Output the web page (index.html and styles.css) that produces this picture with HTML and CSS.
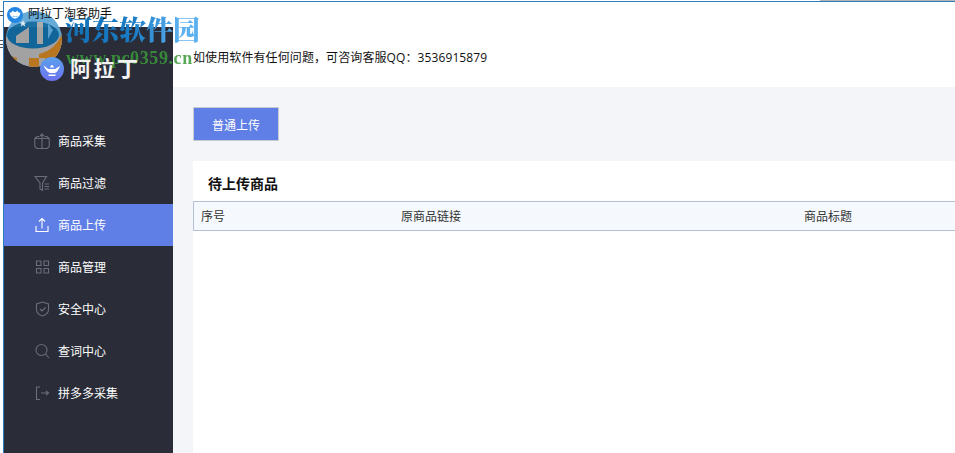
FILE: index.html
```html
<!DOCTYPE html>
<html lang="zh">
<head>
<meta charset="utf-8">
<title>阿拉丁淘客助手</title>
<link rel="stylesheet" href="styles.css">
</head>
<body>
<div class="desktop">
  <div class="topstrip"><span class="topstrip-gray"></span></div>
  <div class="window">
    <div class="titlebar">
      <svg class="appicon" viewBox="0 0 16 16"><circle cx="8" cy="8" r="8" fill="#2487e4"/><path d="M2.500 5.500C4 6 5 5 6 3.500c.6 1 1.300 1.600 2 1.600s1.500-.6 2-1.600c1 1.500 2 2.500 3.500 2-.5 3.500-3 6-5.500 6s-5-2.500-5.500-6z" fill="#fff"/><path d="M5 8.500c1 1.500 5 1.500 6 0-.5 2-5.500 2-6 0z" fill="#2487e4"/></svg>
      <span class="app-title">阿拉丁淘客助手</span>
    </div>
    <div class="app">
      <aside class="sidebar">
        <div class="brand">
          <svg class="brand-icon" viewBox="0 0 24 24"><defs><linearGradient id="bg" x1="0" y1="0" x2="0" y2="1"><stop offset="0" stop-color="#5aa0ee"/><stop offset="1" stop-color="#6d72ee"/></linearGradient></defs><circle cx="12" cy="12" r="12" fill="url(#bg)"/><path d="M3.500 8.500c2 .5 3 3 5 3.500h6c1.500 0 2.500-2 6-3-1.500 1.500-2 4-3.500 5.500-1 1-2 1.500-3.500 1.500h-3c-3 0-5-4-7-7.500z" fill="#fff"/><path d="M10 10.500c.5-1.500 1.300-2.300 2-2.500.7.2 1.500 1 2 2.500zM8.500 17.500h7v1.500h-7z" fill="#fff"/></svg>
          <span class="brand-name">阿拉丁</span>
        </div>
        <nav class="menu">
          <a class="item"><svg class="ico" viewBox="0 0 16 16"><path d="M5.500 3.500H3L.8 5.500v8l2.200 2h10l2.200-2v-8L13 3.500h-2.500M.8 5.500h14.400M8 5.500v10M8 7V1M6 3l2-2 2 2"/></svg><span class="label">商品采集</span></a>
          <a class="item"><svg class="ico" viewBox="0 0 16 16"><path d="M1 1.500h11.500L8.500 8v7.500L6 14V8zM10.500 9H15M10.500 11.500H15M10.500 14H15"/></svg><span class="label">商品过滤</span></a>
          <a class="item active"><svg class="ico" viewBox="0 0 16 16"><path d="M2 9v5.500h12V9M8 11.500V1.500M5 4.500l3-3 3 3"/></svg><span class="label">商品上传</span></a>
          <a class="item"><svg class="ico" viewBox="0 0 16 16"><path d="M2.500 2h4.500v4.500H2.500zM10 2h4.500v4.500H10zM2.500 9.500h4.500V14H2.500zM10 9.500h4.500V14H10z"/></svg><span class="label">商品管理</span></a>
          <a class="item"><svg class="ico" viewBox="0 0 16 16"><path d="M8.500 1l6 2v5.500c0 3-3 5.500-6 6.500-3-1-6-3.500-6-6.500V3zM6 8l2 2 3.500-3.500"/></svg><span class="label">安全中心</span></a>
          <a class="item"><svg class="ico" viewBox="0 0 16 16"><circle cx="7.500" cy="7" r="5.500"/><path d="M11.500 11l3.500 4"/></svg><span class="label">查词中心</span></a>
          <a class="item"><svg class="ico" viewBox="0 0 16 16"><path d="M6 2H2.500v12.500H6M7 8h7.500M12 6l2.500 2-2.500 2"/></svg><span class="label">拼多多采集</span></a>
        </nav>
      </aside>
      <main class="main">
        <header class="notice">如使用软件有任何问题，可咨询客服QQ：3536915879</header>
        <section class="content">
          <button class="upload-btn">普通上传</button>
          <div class="card">
            <h2 class="card-title">待上传商品</h2>
            <div class="thead">
              <span class="col col-id">序号</span>
              <span class="col col-url">原商品链接</span>
              <span class="col col-title">商品标题</span>
            </div>
          </div>
        </section>
      </main>
    </div>
  </div>
  <div class="watermark">
    <svg class="wm-logo" viewBox="0 0 58 56">
      <defs><clipPath id="disc"><circle cx="29" cy="28" r="28"/></clipPath></defs>
      <g clip-path="url(#disc)">
        <rect width="58" height="56" fill="#5ea6d6"/>
        <path d="M0 26h58v30H0z" fill="#a9a9a9"/>
        <path d="M58 20C54 32 46 40 34 43v4h6v9h18z" fill="#c07a20"/>
        <path d="M0 43l12 4v9H0zM24 47h10v9H24z" fill="#c07a20"/>
        <ellipse cx="28" cy="24" rx="26" ry="13.500" fill="#11699e"/>
        <path d="M11 25l13-9v16H11z" fill="#a9a9a9"/>
        <path d="M32 11h6v22h-6z" fill="#a9a9a9"/>
        <path d="M43 13l5 6-5 9z" fill="#5ea6d6"/>
        <path d="M18 9l1 2.500h2.500l-2 1.500.8 2.500-2.300-1.500-2.300 1.500.8-2.500-2-1.500H17z" fill="#fff" opacity=".85"/>
      </g>
    </svg>
    <div class="wm-title">河东软件园</div>
    <div class="wm-url">www.pc0359.cn</div>
    <span class="edge edge-top"></span>
    <span class="edge edge-mid"></span>
  </div>
</div>
</body>
</html>
```
FILE: styles.css
```css
* { box-sizing: border-box; }
html, body { margin: 0; padding: 0; }
body { font-family: "Open Sans", "Noto Sans CJK SC", sans-serif; overflow: hidden; background: #fff; }
.desktop { position: relative; width: 955px; height: 453px; overflow: hidden; padding-left: 3px; }
.topstrip { height: 1px; display: flex; justify-content: flex-end; }
.topstrip-gray { width: 135px; background: #b5b5b5; }
.window { height: 452px; border-top: 1px solid #2b7bbd; border-left: 1px solid #2b7bbd; display: flex; flex-direction: column; }
.titlebar { height: 25px; flex: none; display: flex; align-items: center; gap: 5px; padding-left: 3px; font-size: 12px; color: #111; }
.appicon { width: 16px; height: 16px; position: relative; z-index: 2; }
.app-title { margin-bottom: 3px; position: relative; z-index: 2; }
.app { flex: 1; display: flex; min-height: 0; }
.sidebar { width: 169px; flex: none; background: #2a2d38; }
.brand { height: 84px; display: flex; align-items: center; gap: 6px; padding: 0 0 0 36px; }
.brand-icon { width: 24px; height: 24px; flex: none; position: relative; z-index: 2; }
.brand-name { font-size: 21px; line-height: 24px; margin-bottom: 2px; font-weight: 700; color: #f2f2f2; letter-spacing: 2.500px; position: relative; z-index: 2; }
.menu { display: flex; flex-direction: column; margin-top: 9px; }
.item { height: 42px; display: flex; align-items: center; gap: 8px; padding-left: 30px; font-size: 12px; color: #fff; }
.item.active { background: #5f7ee6; }
.ico { width: 16px; height: 16px; fill: none; stroke: #6a6d7a; stroke-width: 1.100; }
.active .ico { stroke: #fff; }
.main { flex: 1; min-width: 0; display: flex; flex-direction: column; background: #f4f5f9; }
.notice { height: 60px; flex: none; background: #fff; padding: 22px 0 0 20px; font-size: 12px; line-height: 17px; color: #111; letter-spacing: .1px; }
.content { flex: 1; padding: 20px 0 0 20px; display: flex; flex-direction: column; gap: 20px; }
.upload-btn { width: 86px; height: 34px; flex: none; background: #5f7ee6; border: 1px solid #c9ccd6; color: #fff; font: inherit; font-size: 12px; padding: 2px 0 0; }
.card { flex: 1; background: #fff; }
.card-title { margin: 0; height: 40px; padding: 13px 0 0 15px; font-size: 14px; line-height: 19px; font-weight: 700; color: #111; }
.thead { height: 30px; display: flex; align-items: center; background: #f5f9fd; border: 1px solid #b4c0d6; border-right: 0; font-size: 12px; color: #333; }
.col { display: block; flex: none; }
.col-id { width: 207px; padding-left: 7px; }
.col-url { width: 403px; }
.watermark { position: absolute; inset: 0; pointer-events: none; z-index: 1; }
.wm-logo { position: absolute; left: 5px; top: 11px; width: 58px; height: 56px; opacity: .95; }
.wm-title { position: absolute; left: 65px; top: 10px; font-family: "Noto Serif CJK SC", "Noto Sans CJK SC", serif; font-weight: 900; font-size: 27px; line-height: 38px; background: linear-gradient(90deg, #1370b5 0%, #1a7cc4 50%, #5cb0f0 85%); -webkit-background-clip: text; background-clip: text; color: transparent; }
.wm-url { position: absolute; left: 66px; top: 48px; font-family: "Liberation Serif", serif; font-weight: 700; font-size: 18px; line-height: 20px; letter-spacing: .6px; color: #3a9a3a; opacity: .85; }
.edge { position: absolute; left: 0; width: 3px; background: #555; }
.edge-top { top: 11px; height: 1px; box-shadow: 0 4px 0 #555; }
.edge-mid { top: 40px; height: 1px; box-shadow: 0 4px 0 #555, 0 7px 0 #555; }
```
